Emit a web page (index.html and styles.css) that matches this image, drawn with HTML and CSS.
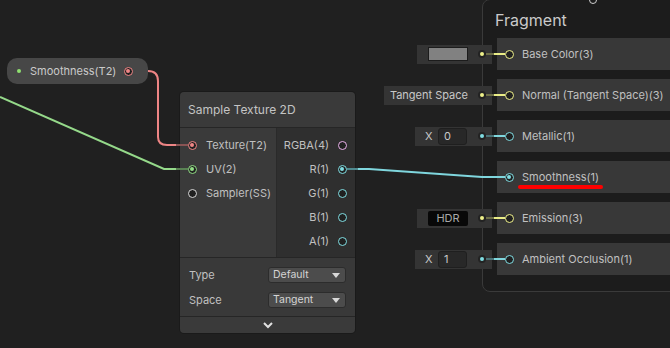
FILE: index.html
```html
<!DOCTYPE html>
<html lang="en">
  <head>
    <meta charset="UTF-8" />
    <title>Shader Graph</title>
    <link rel="stylesheet" href="styles.css">
  </head>
  <body>
    <div class="canvas">
      <!-- property node -->
      <div class="prop-node">
        <span class="prop-dot"></span>
        <span class="prop-label">Smoothness(T2)</span>
        <span class="port t-tex on"></span>
      </div>

      <!-- sample texture node -->
      <div class="node sample">
        <div class="node-title">Sample Texture 2D</div>
        <div class="node-ports">
          <div class="inputs">
            <div class="slot-in"><span class="port t-tex on"></span><span>Texture(T2)</span></div>
            <div class="slot-in"><span class="port t-v2 on"></span><span>UV(2)</span></div>
            <div class="slot-in"><span class="port t-ss"></span><span>Sampler(SS)</span></div>
          </div>
          <div class="outputs">
            <div class="slot-out"><span>RGBA(4)</span><span class="port t-v4"></span></div>
            <div class="slot-out"><span>R(1)</span><span class="port t-v1 on"></span></div>
            <div class="slot-out"><span>G(1)</span><span class="port t-v1"></span></div>
            <div class="slot-out"><span>B(1)</span><span class="port t-v1"></span></div>
            <div class="slot-out"><span>A(1)</span><span class="port t-v1"></span></div>
          </div>
        </div>
        <div class="node-props">
          <div class="prop-row">
            <span>Type</span>
            <div class="dropdown">Default<span class="caret"></span></div>
          </div>
          <div class="prop-row">
            <span>Space</span>
            <div class="dropdown">Tangent<span class="caret"></span></div>
          </div>
        </div>
        <div class="node-footer">
          <svg width="12" height="8" viewBox="0 0 12 8"><polyline points="2,2 6,6 10,2" fill="none" stroke="#e0e0e0" stroke-width="2"/></svg>
        </div>
      </div>

      <!-- fragment master block -->
      <div class="fragment">
        <span class="top-port"></span>
        <div class="frag-title">Fragment</div>
        <div class="frag-rows">
          <div class="frag-row">
            <div class="field-area">
              <div class="field"><span class="swatch"></span><span class="field-dot t-v3"></span></div>
            </div>
            <div class="frag-slot"><span class="port t-v3"></span><span>Base Color(3)</span></div>
          </div>
          <div class="frag-row">
            <div class="field-area">
              <div class="field field-text"><span>Tangent Space</span><span class="field-dot t-v3"></span></div>
            </div>
            <div class="frag-slot"><span class="port t-v3"></span><span>Normal (Tangent Space)(3)</span></div>
          </div>
          <div class="frag-row">
            <div class="field-area">
              <div class="field field-num"><span class="axis">X</span><span class="num">0</span><span class="field-dot t-v1"></span></div>
            </div>
            <div class="frag-slot"><span class="port t-v1"></span><span>Metallic(1)</span></div>
          </div>
          <div class="frag-row">
            <div class="field-area"></div>
            <div class="frag-slot"><span class="port t-v1 on"></span><span class="marked">Smoothness(1)</span></div>
          </div>
          <div class="frag-row">
            <div class="field-area">
              <div class="field"><span class="hdr">HDR</span><span class="field-dot t-v3"></span></div>
            </div>
            <div class="frag-slot"><span class="port t-v3"></span><span>Emission(3)</span></div>
          </div>
          <div class="frag-row">
            <div class="field-area">
              <div class="field field-num"><span class="axis">X</span><span class="num">1</span><span class="field-dot t-v1"></span></div>
            </div>
            <div class="frag-slot"><span class="port t-v1"></span><span>Ambient Occlusion(1)</span></div>
          </div>
        </div>
      </div>

      <!-- edges -->
      <svg class="wires" width="670" height="348" viewBox="0 0 670 348">
        <path d="M148 71 Q158 71 158 81 L158 137 Q158 145 167 145 L176 145" fill="none" stroke="#ee8585" stroke-width="2"/>
        <path d="M176 145 L188 145" stroke="#8a5454" stroke-width="2"/>
        <path d="M0 97 L164 169 L176 169" fill="none" stroke="#95d98a" stroke-width="2"/>
        <path d="M176 169 L188 169" stroke="#5a8254" stroke-width="2"/>
        <path d="M347 169 L358 169" stroke="#4f8a90" stroke-width="2"/>
        <path d="M358 169 L369 169 L482 177 L505 177" fill="none" stroke="#7fd6dd" stroke-width="2"/>
        <path d="M486 54 L505 54 M486 95 L505 95 M486 218 L505 218" stroke="#e9ec86" stroke-width="2"/>
        <path d="M486 54 L494 54 M486 95 L494 95 M486 218 L494 218" stroke="#6c6d48" stroke-width="2"/>
        <path d="M486 136 L505 136 M486 259 L505 259" stroke="#7fd6dd" stroke-width="2"/>
        <path d="M486 136 L494 136 M486 259 L494 259" stroke="#4a7276" stroke-width="2"/>
      </svg>
    </div>
  </body>
</html>
```

FILE: styles.css
```css
body {
  margin: 0;
  padding: 0;
  background-color: #202020;
  font-family: Inter, "Noto Sans", sans-serif;
  color: #c4c4c4;
}

.canvas {
  position: relative;
  width: 670px;
  height: 348px;
  overflow: hidden;
  background-color: #202020;
}

.wires {
  position: absolute;
  left: 0;
  top: 0;
  pointer-events: none;
}

/* ports */
.port {
  display: inline-block;
  box-sizing: border-box;
  width: 9px;
  height: 9px;
  border-radius: 50%;
  border: 1.5px solid #cfcfcf;
  background: #202020;
  flex-shrink: 0;
  position: relative;
}

.port.on::after {
  content: "";
  position: absolute;
  left: 1px;
  top: 1px;
  width: 4px;
  height: 4px;
  border-radius: 50%;
  background: currentColor;
}

.t-tex { border-color: #f08686; color: #f08686; }
.t-v2 { border-color: #92de86; color: #92de86; }
.t-ss { border-color: #d8d8d8; color: #d8d8d8; }
.t-v4 { border-color: #e9b0ea; color: #e9b0ea; }
.t-v1 { border-color: #80dde2; color: #80dde2; }
.t-v3 { border-color: #eef08a; color: #eef08a; }

/* property node */
.prop-node {
  position: absolute;
  left: 7px;
  top: 58px;
  width: 141px;
  height: 26px;
  box-sizing: border-box;
  border-radius: 10px;
  background: #474747;
  display: flex;
  align-items: center;
  padding-left: 10px;
  font-size: 11px;
  color: #cacaca;
}

.prop-dot {
  width: 4px;
  height: 4px;
  border-radius: 50%;
  background: #8fe070;
  margin-right: 9px;
}

.prop-label {
  flex: 1;
}

.prop-node .port {
  margin-right: 15px;
}

/* sample texture node */
.node {
  position: absolute;
  box-sizing: border-box;
  border-radius: 4px;
  overflow: hidden;
  box-shadow: 0 0 0 1px #1a1a1a;
}

.sample {
  left: 180px;
  top: 92px;
  width: 175px;
}

.node-title {
  height: 35px;
  line-height: 35px;
  padding-left: 8px;
  font-size: 12px;
  color: #c4c4c4;
  background: #3a3a3a;
  border-bottom: 1px solid #262626;
}

.node-ports {
  display: flex;
  height: 129px;
  border-bottom: 1px solid #262626;
}

.inputs {
  width: 96px;
  background: #3a3a3a;
  border-right: 1px solid #2a2a2a;
  padding-top: 5px;
}

.outputs {
  flex: 1;
  background: #2f2f2f;
  padding-top: 5px;
}

.slot-in,
.slot-out {
  height: 24px;
  display: flex;
  align-items: center;
  font-size: 11px;
  color: #c0c0c0;
}

.slot-in .port {
  margin-left: 8px;
  margin-right: 9px;
}

.slot-out {
  justify-content: flex-end;
  padding-right: 8px;
}

.slot-out .port {
  margin-left: 9px;
}

.node-props {
  background: #393939;
  padding: 4px 0 4px 9px;
  border-bottom: 1px solid #262626;
}

.prop-row {
  height: 25px;
  display: flex;
  align-items: center;
  justify-content: space-between;
  padding-right: 9px;
  font-size: 11px;
  color: #c0c0c0;
}

.dropdown {
  position: relative;
  box-sizing: border-box;
  width: 78px;
  height: 16px;
  line-height: 14px;
  padding-left: 4px;
  border: 1px solid #2c2c2c;
  border-radius: 3px;
  background: #4c4c4c;
  font-size: 10.5px;
  color: #d4d4d4;
}

.caret {
  position: absolute;
  right: 5px;
  top: 5px;
  border-left: 4px solid transparent;
  border-right: 4px solid transparent;
  border-top: 5px solid #d8d8d8;
}

.node-footer {
  height: 16px;
  background: #3a3a3a;
  display: flex;
  justify-content: center;
  align-items: center;
}

/* fragment block */
.fragment {
  position: absolute;
  left: 482px;
  top: -1px;
  width: 240px;
  height: 293px;
  box-sizing: border-box;
  border: 1px solid #3a3a3a;
  border-radius: 8px;
  background: #1c1c1c;
}

.top-port {
  position: absolute;
  left: 106px;
  top: -4px;
  width: 8px;
  height: 8px;
  box-sizing: border-box;
  border: 1.5px solid #cfcfcf;
  border-radius: 50%;
}

.frag-title {
  height: 38px;
  line-height: 41px;
  padding-left: 12px;
  font-size: 16px;
  color: #cacaca;
}

.frag-rows {
  display: flex;
  flex-direction: column;
  gap: 9px;
  margin-left: -68px;
}

.frag-row {
  display: flex;
  height: 32px;
}

.field-area {
  width: 82px;
  flex-shrink: 0;
  display: flex;
  justify-content: flex-end;
  align-items: center;
  padding-right: 5px;
  box-sizing: border-box;
}

.field {
  height: 19px;
  box-sizing: border-box;
  display: flex;
  align-items: center;
  padding: 0 6px 0 11px;
  background: #343434;
  font-size: 11px;
  color: #c8c8c8;
  flex-shrink: 0;
}

.field-text {
  padding-left: 6px;
}

.field-text span:first-child {
  white-space: nowrap;
  margin-right: 10px;
}

.swatch {
  width: 40px;
  height: 14px;
  box-sizing: border-box;
  background: #818181;
  border: 1px solid #1c1c1c;
  margin-right: 10px;
}

.hdr {
  width: 40px;
  height: 15px;
  line-height: 15px;
  text-align: center;
  background: #080808;
  border-radius: 2px;
  color: #a8a8a8;
  margin-right: 10px;
}

.field-num {
  padding-left: 10px;
}

.axis {
  width: 13px;
  font-size: 11px;
}

.num {
  box-sizing: border-box;
  width: 29px;
  height: 17px;
  line-height: 15px;
  padding-left: 5px;
  border: 1px solid #1f1f1f;
  border-radius: 3px;
  background: #282828;
  margin-right: 11px;
}

.field-dot {
  width: 8px;
  height: 8px;
  border-radius: 50%;
  background: #232323;
  position: relative;
}

.field-dot::after {
  content: "";
  position: absolute;
  left: 2px;
  top: 2px;
  width: 4px;
  height: 4px;
  border-radius: 50%;
  background: currentColor;
}

.frag-slot {
  flex: 1;
  display: flex;
  align-items: center;
  padding-left: 8px;
  background: #383838;
  font-size: 11px;
  color: #c0c0c0;
  white-space: nowrap;
}

.frag-slot .port {
  margin-right: 8px;
}

.marked {
  position: relative;
}

.marked::after {
  content: "";
  position: absolute;
  left: -4px;
  right: -4px;
  bottom: -5px;
  height: 4px;
  border-radius: 2px;
  background: #ff0000;
}
```
